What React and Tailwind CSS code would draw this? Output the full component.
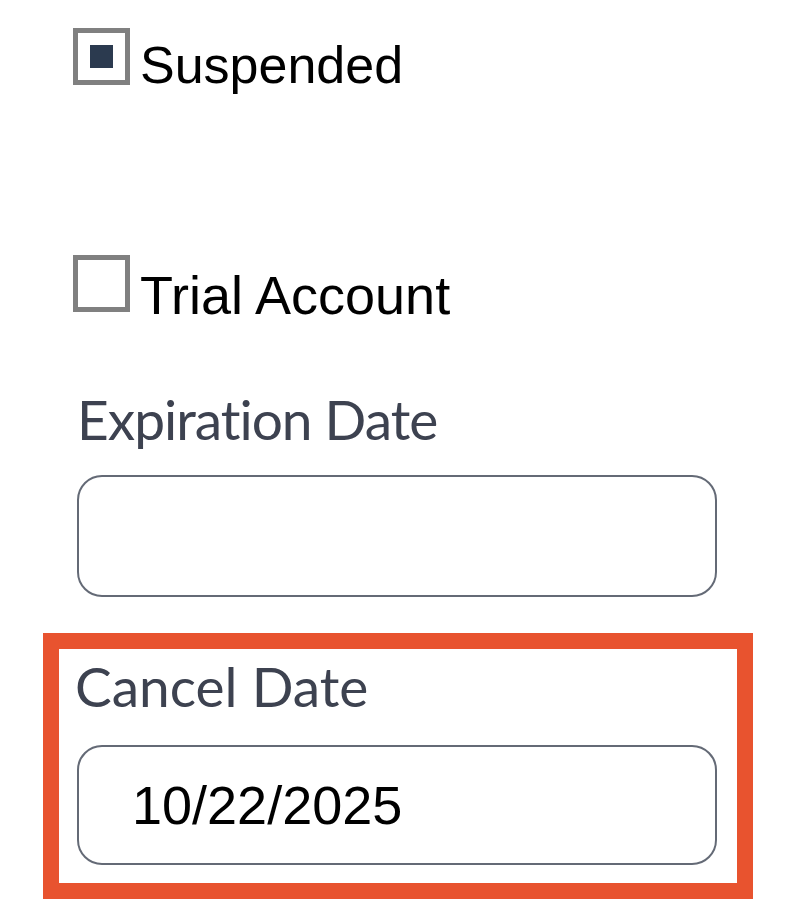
import React from "react";

function Box({ checked }) {
  return (
    <div className="w-[57px] h-[57px] shrink-0 border-[5px] border-[#808080] bg-white flex items-center justify-center">
      {checked && <div className="w-[23px] h-[23px] bg-[#2b3a4f]" />}
    </div>
  );
}

export default function App() {
  return (
    <div className="min-h-[914px] w-[786px] bg-white pt-[28px] pl-[43px] font-['Liberation_Sans',Arial,sans-serif]">
      <div className="ml-[30px] flex items-start gap-[10px]">
        <Box checked />
        <span className="mt-[11px] text-[52px] leading-[52px] text-black">Suspended</span>
      </div>
      <div className="ml-[30px] mt-[164px] flex items-start gap-[10px]">
        <Box />
        <span className="mt-[13px] text-[54px] leading-[54px] text-black">Trial Account</span>
      </div>
      <div className="ml-[34px] mt-[70px] font-['Lato',sans-serif] text-[55px] leading-[55px] tracking-[-1px] [font-variant-ligatures:none] text-[#3d4250]">
        Expiration Date
      </div>
      <input
        readOnly
        value=""
        className="ml-[34px] mt-[28px] block w-[640px] h-[122px] rounded-[25px] border-2 border-[#646a76] bg-white px-[48px] text-[54px] text-black outline-none"
      />
      <div className="mt-[36px] w-[710px] h-[266px] border-[16px] border-[#e8532f] pt-[10px] pl-[18px]">
        <div className="-ml-[2px] font-['Lato',sans-serif] text-[55px] leading-[55px] [font-variant-ligatures:none] text-[#3d4250]">
          Cancel Date
        </div>
        <input
          readOnly
          value="10/22/2025"
          className="mt-[31px] block w-[640px] h-[120px] rounded-[25px] border-2 border-[#646a76] bg-white pl-[53px] font-['Liberation_Sans',Arial,sans-serif] text-[54px] text-black outline-none"
        />
      </div>
    </div>
  );
}
